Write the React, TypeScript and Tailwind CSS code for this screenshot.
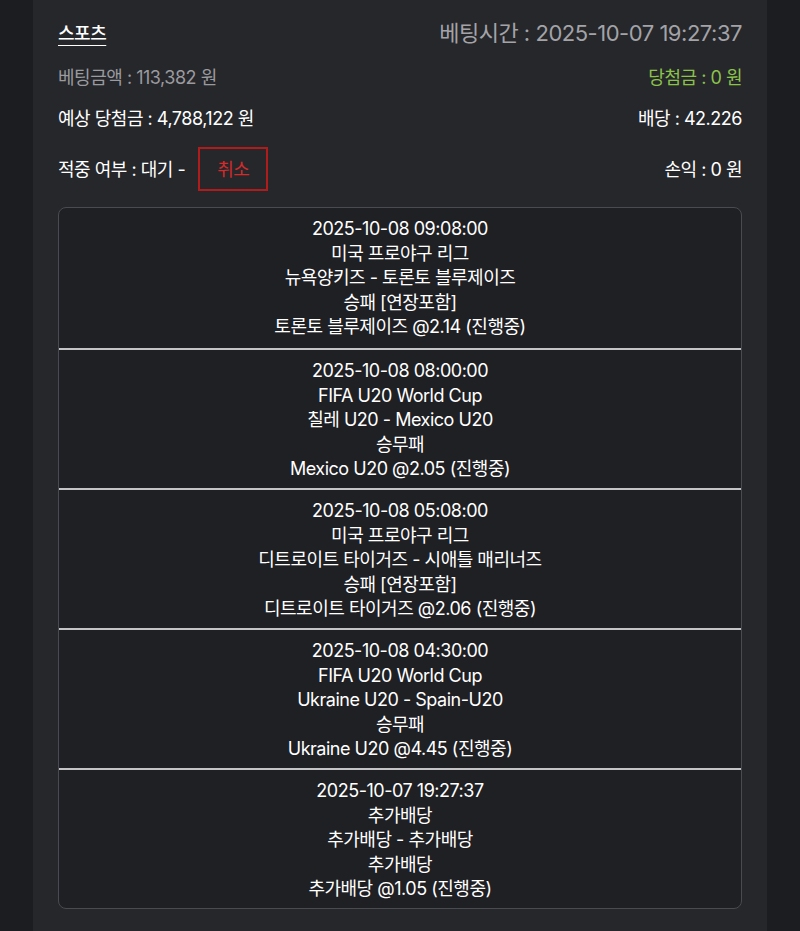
import React from 'react';

const bets = [
  {
    time: '2025-10-08 09:08:00',
    league: '미국 프로야구 리그',
    match: '뉴욕양키즈 - 토론토 블루제이즈',
    market: '승패 [연장포함]',
    pick: '토론토 블루제이즈 @2.14 (진행중)',
  },
  {
    time: '2025-10-08 08:00:00',
    league: 'FIFA U20 World Cup',
    match: '칠레 U20 - Mexico U20',
    market: '승무패',
    pick: 'Mexico U20 @2.05 (진행중)',
  },
  {
    time: '2025-10-08 05:08:00',
    league: '미국 프로야구 리그',
    match: '디트로이트 타이거즈 - 시애틀 매리너즈',
    market: '승패 [연장포함]',
    pick: '디트로이트 타이거즈 @2.06 (진행중)',
  },
  {
    time: '2025-10-08 04:30:00',
    league: 'FIFA U20 World Cup',
    match: 'Ukraine U20 - Spain-U20',
    market: '승무패',
    pick: 'Ukraine U20 @4.45 (진행중)',
  },
  {
    time: '2025-10-07 19:27:37',
    league: '추가배당',
    match: '추가배당 - 추가배당',
    market: '추가배당',
    pick: '추가배당 @1.05 (진행중)',
  },
];

const App: React.FC = () => {
  return (
    <div
      className="min-h-[931px] w-[800px] bg-[#1c1d21] text-white tracking-[-0.03em]"
      style={{ fontFamily: 'Inter, "Noto Sans CJK KR", sans-serif' }}
    >
      <div className="mx-[33px] min-h-[931px] bg-[#26272b] px-[25px] pt-[17px] pb-6">
        <div className="flex items-center justify-between h-[32px]">
          <span className="text-[18px] font-medium underline underline-offset-[5px] decoration-1">스포츠</span>
          <span className="text-[22px] text-[#a3a3a8]">베팅시간 : 2025-10-07 19:27:37</span>
        </div>

        <div className="mt-[12px] flex items-center justify-between h-[32px] text-[18px]">
          <span className="text-[#9a9a9f]">베팅금액 : 113,382 원</span>
          <span className="text-[#8bc34a]">당첨금 : 0 원</span>
        </div>

        <div className="mt-[9px] flex items-center justify-between h-[32px] text-[18px]">
          <span>예상 당첨금 : 4,788,122 원</span>
          <span>배당 : 42.226</span>
        </div>

        <div className="mt-[13px] flex items-center justify-between text-[18px]">
          <div className="flex items-center">
            <span>적중 여부 : 대기 -</span>
            <span className="ml-[13px] flex h-[44px] w-[70px] items-center justify-center border-2 border-[#b01c1c] text-[#d42a2a]">
              취소
            </span>
          </div>
          <span>손익 : 0 원</span>
        </div>

        <div className="mt-[16px] overflow-hidden rounded-[8px] border border-[#4a4b50] bg-[#1f2024]">
          {bets.map((b, i) => (
            <div
              key={i}
              className={`flex h-[140px] flex-col items-center pt-[9px] text-[18px] leading-[24.5px] ${
                i > 0 ? 'border-t-2 border-[#c4c4c6]' : ''
              }`}
            >
              <span>{b.time}</span>
              <span>{b.league}</span>
              <span>{b.match}</span>
              <span>{b.market}</span>
              <span>{b.pick}</span>
            </div>
          ))}
        </div>
      </div>
    </div>
  );
};

export default App;
